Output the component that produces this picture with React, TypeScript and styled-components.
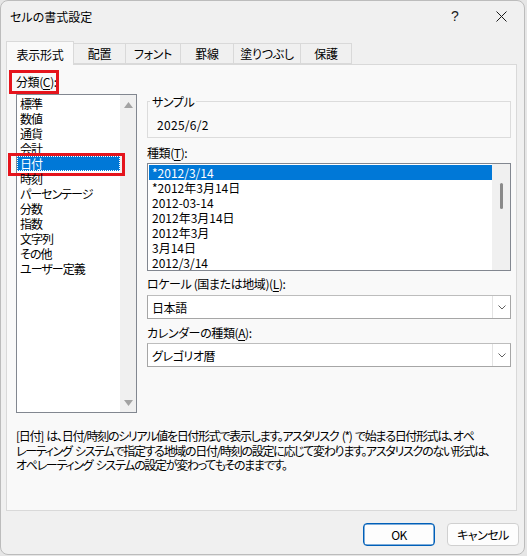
import React from "react";
import styled, { createGlobalStyle } from "styled-components";

const GlobalStyle = createGlobalStyle`
  html, body {
    margin: 0;
    padding: 0;
    background: #e6e6e6;
  }
  body {
    font-family: "Noto Sans CJK JP", "Noto Sans", sans-serif;
    font-size: 12px;
    color: #000;
  }
  * {
    box-sizing: border-box;
  }
`;

const Window = styled.div`
  width: 525px;
  height: 555px;
  background: #f0f0f0;
  border: 1px solid #bcbcbc;
  border-radius: 8px;
  display: flex;
  flex-direction: column;
  overflow: hidden;
  font-feature-settings: "palt";
`;

const TitleBar = styled.div`
  height: 30px;
  display: flex;
  align-items: center;
  padding-left: 9px;
`;

const Title = styled.div`
  flex: 1;
  font-size: 12px;
  line-height: 15px;
`;

const TitleButton = styled.div`
  width: 46px;
  height: 30px;
  display: flex;
  align-items: center;
  justify-content: center;
  font-family: "Liberation Sans", sans-serif;
  font-size: 14px;
  color: #1a1a1a;
`;

const TabRow = styled.div`
  display: flex;
  align-items: flex-end;
  margin-top: 10px;
  padding-left: 5px;
  position: relative;
  z-index: 1;
`;

const Tab = styled.div<{ $w: number; $active?: boolean }>`
  width: ${(p) => p.$w}px;
  height: ${(p) => (p.$active ? 24 : 21)}px;
  margin-bottom: ${(p) => (p.$active ? -1 : 0)}px;
  display: flex;
  align-items: center;
  justify-content: center;
  background: ${(p) => (p.$active ? "#f9f9f9" : "#f0f0f0")};
  border: 1px solid #d9d9d9;
  border-bottom: ${(p) => (p.$active ? "none" : "1px solid #d9d9d9")};
  margin-left: -1px;
  line-height: 15px;
  letter-spacing: -0.3px;
  padding-top: ${(p) => (p.$active ? 1 : 0)}px;
  &:first-child {
    margin-left: 0;
  }
`;

const Panel = styled.div`
  margin: 0 7px 0 5px;
  height: 447px;
  background: #f9f9f9;
  border: 1px solid #d9d9d9;
  padding: 9px 5px 0 9px;
  display: flex;
  flex-direction: column;
`;

const Columns = styled.div`
  display: grid;
  grid-template-columns: 121px 364px;
  column-gap: 10px;
`;

const Column = styled.div`
  display: flex;
  flex-direction: column;
  align-items: flex-start;
`;

const Label = styled.div<{ $gap?: number }>`
  line-height: 15px;
  margin-top: ${(p) => p.$gap ?? 0}px;
  white-space: nowrap;
  letter-spacing: -0.4px;
`;

const Marked = styled.span`
  position: relative;
  display: inline-block;
  &::after {
    content: "";
    position: absolute;
    left: -7px;
    right: -2px;
    top: -4px;
    bottom: -5px;
    border: 3px solid #e5141c;
  }
`;

const Key = styled.span`
  text-decoration: underline;
  text-underline-offset: 2px;
`;

const ListBox = styled.div<{ $w: number; $h: number; $gap: number }>`
  width: ${(p) => p.$w}px;
  height: ${(p) => p.$h}px;
  margin-top: ${(p) => p.$gap}px;
  border: 1px solid #828790;
  background: #fff;
  display: flex;
`;

const Items = styled.div<{ $pad: number; $tight?: boolean }>`
  flex: 1;
  padding: 1px 0 0 ${(p) => p.$pad}px;
  letter-spacing: ${(p) => (p.$tight ? "-1px" : "0")};
`;

const Item = styled.div<{ $selected?: boolean; $marked?: boolean; $inset: number }>`
  position: relative;
  height: 15px;
  line-height: 15px;
  padding-left: ${(p) => p.$inset}px;
  white-space: nowrap;
  background: ${(p) => (p.$selected ? "#0078d7" : "transparent")};
  color: ${(p) => (p.$selected ? "#fff" : "#000")};
  outline: ${(p) => (p.$selected && p.$marked ? "1px dotted #fff" : "none")};
  outline-offset: -1px;
  &::after {
    content: "";
    display: ${(p) => (p.$marked ? "block" : "none")};
    position: absolute;
    left: -9px;
    right: -5px;
    top: -3px;
    bottom: -5px;
    border: 3px solid #e5141c;
  }
`;

const ScrollTrack = styled.div<{ $w: number }>`
  width: ${(p) => p.$w}px;
  background: #f0f0f0;
  display: flex;
  flex-direction: column;
  align-items: center;
  justify-content: space-between;
  padding: 7px 0 6px;
`;

const Thumb = styled.div`
  width: 3px;
  height: 26px;
  margin-top: 12px;
  border-radius: 2px;
  background: #8a8a8a;
`;

const GroupBox = styled.div`
  width: 364px;
  margin-top: 27px;
  border: 1px solid #dcdcdc;
`;

const Caption = styled.div`
  width: fit-content;
  margin: -8px 0 0 2px;
  padding: 0 2px;
  line-height: 15px;
  letter-spacing: -0.4px;
  background: #f9f9f9;
`;

const SampleValue = styled.div`
  padding: 8px 0 5px 9px;
  line-height: 15px;
  letter-spacing: 0.3px;
`;

const Combo = styled.div<{ $gap: number }>`
  width: 364px;
  height: 24px;
  margin-top: ${(p) => p.$gap}px;
  border: 1px solid #a6a6a6;
  border-top-color: #bdbdbd;
  background: #fff;
  display: flex;
  align-items: center;
`;

const ComboText = styled.div`
  flex: 1;
  padding-left: 4px;
  line-height: 15px;
  letter-spacing: -0.4px;
`;

const ComboArrow = styled.div`
  width: 18px;
  height: 100%;
  border-left: 1px solid #e3e3e3;
  display: flex;
  align-items: center;
  justify-content: center;
`;

const Description = styled.div`
  margin-top: 16px;
  line-height: 14.5px;
  letter-spacing: -1.3px;
  word-spacing: 2px;
`;

const Line = styled.div`
  white-space: nowrap;
`;

const ButtonRow = styled.div`
  display: flex;
  justify-content: flex-end;
  gap: 12px;
  margin-top: 12px;
  padding-right: 5px;
`;

const Button = styled.div<{ $primary?: boolean }>`
  width: 72px;
  height: 23px;
  border-radius: 4px;
  background: #fdfdfd;
  border: 1px solid ${(p) => (p.$primary ? "#005fb8" : "#d0d0d0")};
  box-shadow: ${(p) => (p.$primary ? "inset 0 0 0 0.5px #005fb8" : "none")};
  display: flex;
  align-items: center;
  justify-content: center;
  line-height: 15px;
  letter-spacing: -0.5px;
`;

const tabs = [
  { name: "表示形式", w: 68 },
  { name: "配置", w: 53 },
  { name: "フォント", w: 56 },
  { name: "罫線", w: 54 },
  { name: "塗りつぶし", w: 68 },
  { name: "保護", w: 52 },
];

const categories = [
  "標準",
  "数値",
  "通貨",
  "会計",
  "日付",
  "時刻",
  "パーセンテージ",
  "分数",
  "指数",
  "文字列",
  "その他",
  "ユーザー定義",
];

const dateTypes = [
  "*2012/3/14",
  "*2012年3月14日",
  "2012-03-14",
  "2012年3月14日",
  "2012年3月",
  "3月14日",
  "2012/3/14",
];

const Arrow = ({ down }: { down?: boolean }) => (
  <svg width="9" height="6" viewBox="0 0 9 6">
    <polygon
      points={down ? "0,0 9,0 4.5,6" : "0,6 9,6 4.5,0"}
      fill="#a3a3a3"
    />
  </svg>
);

const Chevron = () => (
  <svg width="8" height="5" viewBox="0 0 8 5">
    <polyline points="0.5,0.5 4,4 7.5,0.5" fill="none" stroke="#606060" strokeWidth="1" />
  </svg>
);

const App = () => {
  return (
    <>
      <GlobalStyle />
      <Window>
        <TitleBar>
          <Title>セルの書式設定</Title>
          <TitleButton>?</TitleButton>
          <TitleButton>
            <svg width="11" height="11" viewBox="0 0 11 11">
              <path d="M0.5 0.5 L10.5 10.5 M10.5 0.5 L0.5 10.5" stroke="#1a1a1a" strokeWidth="1" />
            </svg>
          </TitleButton>
        </TitleBar>

        <TabRow>
          {tabs.map((t, i) => (
            <Tab key={t.name} $w={t.w} $active={i === 0}>
              {t.name}
            </Tab>
          ))}
        </TabRow>

        <Panel>
          <Columns>
            <Column>
              <Label>
                <Marked>
                  分類(<Key>C</Key>):
                </Marked>
              </Label>
              <ListBox $w={121} $h={319} $gap={5}>
                <Items $pad={0} $tight>
                  {categories.map((c) => (
                    <Item
                      key={c}
                      $inset={3}
                      $selected={c === "日付"}
                      $marked={c === "日付"}
                    >
                      {c}
                    </Item>
                  ))}
                </Items>
                <ScrollTrack $w={16}>
                  <Arrow />
                  <Arrow down />
                </ScrollTrack>
              </ListBox>
            </Column>

            <Column>
              <GroupBox>
                <Caption>サンプル</Caption>
                <SampleValue>2025/6/2</SampleValue>
              </GroupBox>

              <Label $gap={7}>
                種類(<Key>T</Key>):
              </Label>
              <ListBox $w={364} $h={108} $gap={3}>
                <Items $pad={1}>
                  {dateTypes.map((d, i) => (
                    <Item key={d + i} $inset={3} $selected={i === 0}>
                      {d}
                    </Item>
                  ))}
                </Items>
                <ScrollTrack $w={18}>
                  <Thumb />
                  <span />
                </ScrollTrack>
              </ListBox>

              <Label $gap={5}>
                ロケール (国または地域)(<Key>L</Key>):
              </Label>
              <Combo $gap={4}>
                <ComboText>日本語</ComboText>
                <ComboArrow>
                  <Chevron />
                </ComboArrow>
              </Combo>

              <Label $gap={6}>
                カレンダーの種類(<Key>A</Key>):
              </Label>
              <Combo $gap={3}>
                <ComboText>グレゴリオ暦</ComboText>
                <ComboArrow>
                  <Chevron />
                </ComboArrow>
              </Combo>
            </Column>
          </Columns>

          <Description>
            <Line>
              [日付] は、日付/時刻のシリアル値を日付形式で表示します。アスタリスク (*) で始まる日付形式は、オペ
            </Line>
            <Line>
              レーティング システムで指定する地域の日付/時刻の設定に応じて変わります。アスタリスクのない形式は、
            </Line>
            <Line>オペレーティング システムの設定が変わってもそのままです。</Line>
          </Description>
        </Panel>

        <ButtonRow>
          <Button $primary>OK</Button>
          <Button>キャンセル</Button>
        </ButtonRow>
      </Window>
    </>
  );
};

export default App;
